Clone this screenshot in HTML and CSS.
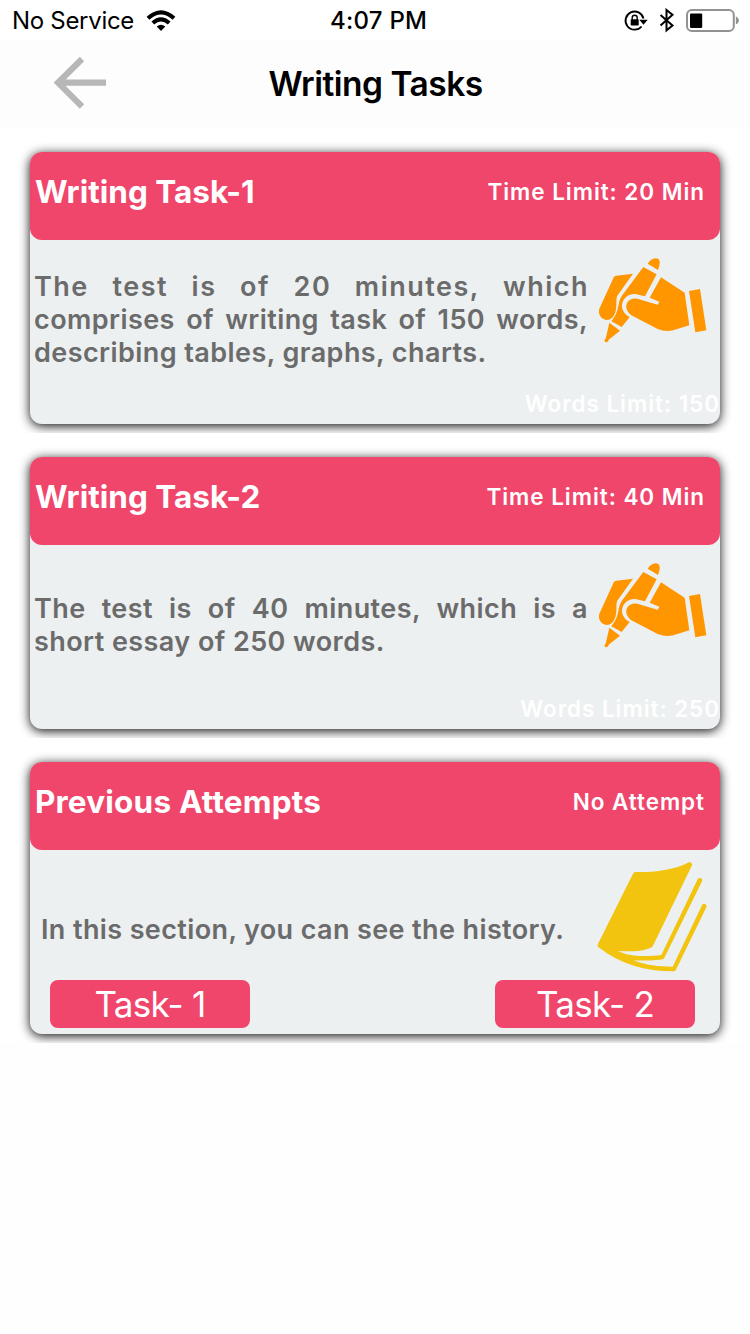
FILE: index.html
```html
<!DOCTYPE html>
<html lang="en">
<head>
<meta charset="utf-8">
<title>Writing Tasks</title>
<link rel="stylesheet" href="styles.css">
</head>
<body>
<svg class="defs" width="0" height="0">
  <symbol id="hand" viewBox="42 39 324 255">
    <path d="M87 95Q89 93 94 92L144 86L98 151C93 157 95 170 94 184C92 209 83 225 64 225C49 223 38 208 43 191Z"/>
    <path d="M188 56C195 43 209 36 219 41C227 47 225 58 219 75Z"/>
    <path d="M175 66L215 88L180 154L151 147C130 146 113 160 111 180C110 194 119 209 134 216L110 246L79 229C101 204 99 178 105 163L110 153Z"/>
    <path d="M228 97L299 143L313 241L265 256Q240 261 218 252L139 211C121 198 119 177 133 166C144 158 155 160 167 164L218 179L223 170L194 158Z"/>
    <path d="M312 138L345 132L364 256L331 262Z"/>
    <path d="M73 233L105 257L71 284C70 291 64 294 59 289C57 286 59 283 62 281Z"/>
  </symbol>
  <symbol id="book" viewBox="36 36 330 330">
    <path d="M151 66C208 67 263 61 309 38C315 34 323 39 321 46L204 287C201 294 187 296 180 299C158 305 130 304 99 303C131 319 174 321 229 315L338 88C344 79 355 86 351 94L239 322C237 328 231 329 225 329C200 331 174 333 146 331C180 346 223 350 263 350L351 166C356 157 367 163 364 172L274 357C272 362 270 364 264 364C181 364 107 343 44 294C37 290 36 286 40 280L144 71Q146 66 151 66Z"/>
  </symbol>
</svg>

<header class="status">
  <span class="carrier">No Service</span>
  <svg class="wifi" width="30" height="22" viewBox="0 0 30 22">
    <path d="M2 8.2Q15-3.6 28 8.2M6.8 13Q15 5.6 23.2 13" fill="none" stroke="#000" stroke-width="4"/>
    <path d="M10.7 16.6Q15 12.8 19.3 16.6L15 21Z"/>
  </svg>
  <span class="clock">4:07 PM</span>
  <svg class="indicators" width="116" height="26" viewBox="0 0 116 26">
    <path d="M18.6 18.5A9.1 9.1 0 1 1 20.5 10.5" fill="none" stroke="#000" stroke-width="1.8"/>
    <path d="M16.3 11.7H24.7L20.5 16.7Z"/>
    <rect x="7.7" y="11.3" width="8" height="6.2" rx=".8"/>
    <path d="M9.2 12V9.7a2.5 2.5 0 0 1 5 0V12" fill="none" stroke="#000" stroke-width="1.4"/>
    <path d="M37.5 7L49.5 17.5L43.5 22.3V2L49.5 6.8L37.5 17.5" fill="none" stroke="#000" stroke-width="2"/>
    <rect x="64" y="2" width="46.8" height="21" rx="4.8" fill="#fff" stroke="#929292" stroke-width="2"/>
    <rect x="67" y="5.4" width="12.2" height="14.6" rx="1.2"/>
    <path d="M112.9 8.3Q116 10 116 12.4T112.9 16.6Z" fill="#929292"/>
  </svg>
</header>

<nav class="navbar">
  <svg class="back" width="52" height="52" viewBox="0 0 52 52">
    <path d="M28 2L4 25.7L28 49.5M5 25.7H52" fill="none" stroke="#b7b7b7" stroke-width="6.2"/>
  </svg>
  <h1>Writing Tasks</h1>
</nav>

<main>
  <section class="cell">
    <article class="card">
      <div class="head"><h2>Writing Task-1</h2><span class="note">Time Limit: 20 Min</span></div>
      <div class="body">
        <p class="desc three"><span class="line a1">The test is of 20 minutes, which</span><span class="line a2">comprises of writing task of 150 words,</span><span class="line a3">describing tables, graphs, charts.</span></p>
        <svg class="hand"><use href="#hand"/></svg>
      </div>
      <div class="limit">Words Limit: 150</div>
    </article>
  </section>
  <section class="cell">
    <article class="card">
      <div class="head"><h2>Writing Task-2</h2><span class="note">Time Limit: 40 Min</span></div>
      <div class="body">
        <p class="desc"><span class="line b1">The test is of 40 minutes, which is a</span><span class="line b2">short essay of 250 words.</span></p>
        <svg class="hand"><use href="#hand"/></svg>
      </div>
      <div class="limit">Words Limit: 250</div>
    </article>
  </section>
  <section class="cell">
    <article class="card">
      <div class="head"><h2 class="prev">Previous Attempts</h2><span class="note">No Attempt</span></div>
      <div class="body history">
        <p class="desc"><span class="line c1">In this section, you can see the history.</span></p>
        <svg class="book"><use href="#book"/></svg>
      </div>
      <div class="actions"><button class="task">Task- 1</button><button class="task">Task- 2</button></div>
    </article>
  </section>
</main>
</body>
</html>
```
FILE: styles.css
```css
* { box-sizing: border-box; }
body {
  margin: 0;
  height: 1334px;
  overflow: hidden;
  background: #fefefe;
  font-family: Inter, "Liberation Sans", sans-serif;
  color: #000;
}
h1, h2, p { margin: 0; }
svg { display: block; flex: none; }
.defs { display: none; }

.status {
  height: 41px;
  display: grid;
  grid-template-columns: 134px 196px 1fr auto;
  align-items: center;
  padding: 0 11px 0 12px;
  background: #fff;
  font-size: 24px;
  white-space: nowrap;
}
.carrier { letter-spacing: -.3px; }
.clock { font-weight: 500; letter-spacing: .25px; margin-left: -12px; }

.navbar {
  height: 87px;
  display: grid;
  grid-template-columns: 214.5px 1fr;
  padding: 0 54px;
  align-items: center;
  background: #fdfdfd;
}
.navbar h1 { font-size: 33.5px; font-weight: 600; letter-spacing: -.5px; margin-top: -1px; }
.back { margin-top: -4px; }

.cell {
  height: 305px;
  padding: 24px 30px 9px;
  overflow: hidden;
  background: #fff;
}
.card {
  height: 272px;
  display: flex;
  flex-direction: column;
  border-radius: 12px;
  background: #ecf0f1;
  box-shadow: 0 2px 11px rgba(0, 0, 0, .95);
}
.head {
  height: 88px;
  flex: none;
  display: flex;
  justify-content: space-between;
  padding: 0 16px 0 5px;
  border-radius: 12px;
  background: #f0466b;
  color: #fff;
  line-height: 80px;
}
.head h2 { font-size: 31.5px; font-weight: 700; letter-spacing: 0; }
.head .prev { letter-spacing: .2px; }
.note { font-size: 22.5px; font-weight: 600; letter-spacing: .95px; margin-right: -1px; }
.body {
  height: 144px;
  display: flex;
  justify-content: space-between;
  padding: 18px 13px 0 4px;
}
.desc {
  display: flex;
  flex-direction: column;
  justify-content: center;
  height: 124px;
  font-size: 27px;
  font-weight: 600;
  line-height: 33px;
  color: #6b6b6b;
  white-space: nowrap;
}
.three { height: 122px; }
.line { display: block; width: 554px; }
.a1, .a2, .b1 { text-align-last: justify; }
.a1 { letter-spacing: 1.5px; width: 555px; }
.a2, .a3, .b1, .b2, .c1 { letter-spacing: .43px; }
.c1 { letter-spacing: .38px; }
.hand { width: 108px; height: 85px; fill: #ff9600; margin-left: -1px; }
.limit {
  text-align: right;
  color: #fff;
  font-size: 22.5px;
  font-weight: 600;
  letter-spacing: .95px;
  line-height: 40px;
}
.history { height: 130px; padding: 12px 13px 0 11px; }
.history .desc { height: 134px; }
.book { width: 110px; height: 110px; fill: #f2c40f; }
.actions { display: flex; justify-content: space-between; padding: 0 25px 0 20px; }
.task {
  width: 200px;
  height: 48px;
  padding: 0;
  border: 0;
  border-radius: 8px;
  background: #f0466b;
  color: #fff;
  font: 400 35px/48px Inter, "Liberation Sans", sans-serif;
  letter-spacing: -.7px;
}
```
